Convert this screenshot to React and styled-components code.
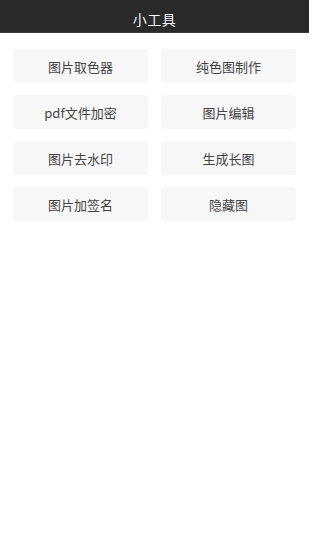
import React from 'react';
import styled, { createGlobalStyle } from 'styled-components';

const GlobalStyle = createGlobalStyle`
  html, body {
    margin: 0;
    padding: 0;
    background: #fff;
  }
  body {
    font-family: "Noto Sans CJK SC", "Noto Sans", sans-serif;
  }
`;

const Page = styled.div`
  width: 309px;
  min-height: 550px;
  background: #fff;
`;

const TopBar = styled.header`
  height: 33px;
  background: #2a2a2a;
  border-bottom: 1px solid #3a3a3a;
  box-sizing: border-box;
  display: flex;
  align-items: center;
  justify-content: center;
  padding-top: 5px;
`;

const Title = styled.h1`
  margin: 0;
  font-size: 14px;
  font-weight: 400;
  color: #f4f4f4;
  letter-spacing: 0.5px;
`;

const ToolGrid = styled.div`
  display: grid;
  grid-template-columns: 1fr 1fr;
  column-gap: 13px;
  row-gap: 12px;
  padding: 16px 13px;
`;

const ToolButton = styled.button`
  height: 34px;
  border: none;
  border-radius: 4px;
  background: #f7f7f7;
  color: #444;
  font-family: inherit;
  font-size: 13px;
  display: flex;
  align-items: center;
  justify-content: center;
  padding: 0;
`;

const tools = [
  '图片取色器',
  '纯色图制作',
  'pdf文件加密',
  '图片编辑',
  '图片去水印',
  '生成长图',
  '图片加签名',
  '隐藏图'
];

export default function App() {
  return (
    <Page>
      <GlobalStyle />
      <TopBar>
        <Title>小工具</Title>
      </TopBar>
      <ToolGrid>
        {tools.map((tool) => (
          <ToolButton key={tool}>{tool}</ToolButton>
        ))}
      </ToolGrid>
    </Page>
  );
}
